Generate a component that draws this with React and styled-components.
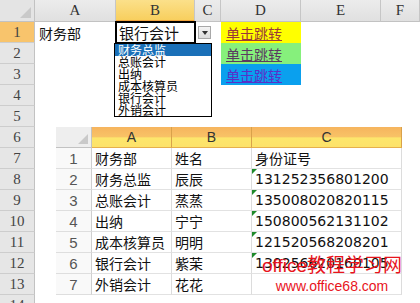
import React from 'react';
import styled, { createGlobalStyle } from 'styled-components';

const GlobalStyle = createGlobalStyle`
  html, body { margin: 0; padding: 0; background: #fff; overflow: hidden; }
  body { font-family: "Liberation Sans", "Noto Sans CJK SC", sans-serif; }
`;

const cjk = `"Noto Sans CJK SC", "Liberation Sans", sans-serif`;

const Sheet = styled.div`
  position: relative;
  width: 420px;
  height: 303px;
  overflow: hidden;
  display: grid;
  grid-template-columns: 35px 81px 79px 26px 80px 80px 39px;
  grid-template-rows: 22px repeat(14, 21px);
`;

const Corner = styled.div`
  position: relative;
  background: ${p => p.$light ? '#eeeeee' : '#e4e4e4'};
  border-right: 1px solid #c2c2c2;
  border-bottom: 1px solid #c2c2c2;
  &::after {
    content: '';
    position: absolute;
    right: 3px;
    bottom: 3px;
    border-left: ${p => p.$size || 11}px solid transparent;
    border-bottom: ${p => p.$size || 11}px solid #c9c9c9;
  }
`;

const ColHead = styled.div`
  display: flex;
  align-items: center;
  justify-content: center;
  font-family: "Liberation Serif", serif;
  font-size: 15px;
  color: #333;
  background: ${p => p.$active ? 'linear-gradient(#fbe08a, #f8cf5e)' : 'linear-gradient(#ececec, #e0e0e0)'};
  border-right: 1px solid #c6c6c6;
  border-bottom: ${p => p.$active ? '2px solid #f1a33b' : '1px solid #c2c2c2'};
`;

const RowHead = styled.div`
  display: flex;
  align-items: center;
  justify-content: center;
  font-family: "Liberation Serif", serif;
  font-size: 15px;
  color: #444;
  background: ${p => p.$active ? '#f8c46c' : '#e6e6e6'};
  border-right: 1px solid #c2c2c2;
  border-bottom: 1px solid #cdcdcd;
`;

const Cell = styled.div`
  position: relative;
  display: flex;
  align-items: center;
  padding-left: 4px;
  font-family: ${cjk};
  font-size: 14px;
  color: #111;
  white-space: nowrap;
  background: ${p => p.$bg || 'transparent'};
`;

const EditCell = styled(Cell)`
  outline: 2px solid #000;
  outline-offset: -1px;
  z-index: 2;
  font-size: 15px;
  padding-left: 3px;
`;

const ArrowCell = styled.div`
  display: flex;
  align-items: center;
  padding-left: 3px;
`;

const ArrowBtn = styled.div`
  width: 11px;
  height: 11px;
  display: flex;
  align-items: center;
  justify-content: center;
  background: linear-gradient(#f4f4f4, #dcdcdc);
  border: 1px solid #a8a8a8;
  &::after {
    content: '';
    border-left: 3px solid transparent;
    border-right: 3px solid transparent;
    border-top: 4px solid #333;
  }
`;

const LinkCell = styled(Cell)`
  text-decoration: underline;
  color: ${p => p.$color};
  padding-left: 5px;
`;

const DropList = styled.div`
  position: absolute;
  left: 114px;
  top: 43px;
  width: 96px;
  border: 1px solid #000;
  background: #fff;
  z-index: 3;
`;

const DropItem = styled.div`
  height: 12px;
  display: flex;
  align-items: center;
  font-family: ${cjk};
  font-size: 12px;
  line-height: 12px;
  padding-left: 3px;
  color: ${p => p.$selected ? '#fff' : '#000'};
  background: ${p => p.$selected ? '#1a70b8' : 'transparent'};
  white-space: nowrap;
`;

const Picture = styled.div`
  position: absolute;
  left: 56px;
  top: 127px;
  width: 346px;
  height: 168px;
  background: #fff;
  display: grid;
  grid-template-columns: 36px 80px 80px 150px;
  grid-template-rows: repeat(8, 21px);
  z-index: 1;
`;

const PicHead = styled.div`
  display: flex;
  align-items: center;
  justify-content: center;
  font-family: "Liberation Sans", sans-serif;
  font-size: 14px;
  color: #333;
  background: linear-gradient(#f6b45e 0%, #f8c266 48%, #fde66c 55%, #fde26a 100%);
  border-right: 1px solid #d9a24a;
  border-bottom: 1px solid #e6b04c;
`;

const PicRowHead = styled.div`
  display: flex;
  align-items: center;
  justify-content: center;
  font-family: "Liberation Sans", sans-serif;
  font-size: 15px;
  color: #555;
  background: #f9f9f9;
  border-right: 1px solid #cfcfcf;
  border-bottom: 1px solid #dedede;
`;

const PicCell = styled.div`
  position: relative;
  display: flex;
  align-items: center;
  padding-left: 3px;
  font-family: ${p => p.$num ? '"DejaVu Sans", sans-serif' : cjk};
  font-size: 14px;
  color: #111;
  white-space: nowrap;
  overflow: hidden;
  border-right: 1px solid #dcdcdc;
  border-bottom: 1px solid #e2e2e2;
  &::before {
    content: '';
    display: ${p => p.$flag ? 'block' : 'none'};
    position: absolute;
    left: 0;
    top: 0;
    border-top: 5px solid #1f8a2a;
    border-right: 5px solid transparent;
  }
`;

const Watermark = styled.div`
  position: absolute;
  left: 256px;
  top: 255px;
  width: 152px;
  display: flex;
  flex-direction: column;
  align-items: center;
  color: #e8141c;
  z-index: 4;
  font-family: "Liberation Sans", ${cjk};
`;

const MarkTitle = styled.div`
  font-size: 19px;
  line-height: 21px;
  white-space: nowrap;
`;

const MarkUrl = styled.div`
  font-size: 14px;
  line-height: 16px;
  margin-top: 2px;
  white-space: nowrap;
`;

const cols = ['A', 'B', 'C', 'D', 'E', 'F'];
const options = ['财务总监', '总账会计', '出纳', '成本核算员', '银行会计', '外销会计'];
const links = [
  { bg: '#ffff00', color: '#993a3a' },
  { bg: '#86f07c', color: '#5a3a60' },
  { bg: '#0aa0ee', color: '#5a2fc8' },
];
const people = [
  ['财务部', '姓名', '身份证号'],
  ['财务总监', '辰辰', '131252356801200'],
  ['总账会计', '蒸蒸', '135008020820115'],
  ['出纳', '宁宁', '150800562131102'],
  ['成本核算员', '明明', '121520568208201'],
  ['银行会计', '紫茉', '130256620160105'],
  ['外销会计', '花花', ''],
];

export default function App() {
  const rows = [];
  for (let r = 1; r <= 14; r++) {
    rows.push(<RowHead key={'h' + r} $active={r === 1}>{r}</RowHead>);
    if (r === 1) {
      rows.push(<Cell key="a1">财务部</Cell>);
      rows.push(<EditCell key="b1">银行会计</EditCell>);
      rows.push(<ArrowCell key="c1"><ArrowBtn /></ArrowCell>);
    } else {
      rows.push(<Cell key={'a' + r} />, <Cell key={'b' + r} />, <Cell key={'c' + r} />);
    }
    const link = links[r - 1];
    rows.push(link
      ? <LinkCell key={'d' + r} $bg={link.bg} $color={link.color}>单击跳转</LinkCell>
      : <Cell key={'d' + r} />);
    rows.push(<Cell key={'e' + r} />, <Cell key={'f' + r} />);
  }

  return (
    <>
      <GlobalStyle />
      <Sheet>
        <Corner />
        {cols.map(c => <ColHead key={c} $active={c === 'B'}>{c}</ColHead>)}
        {rows}

        <DropList>
          {options.map((o, i) => <DropItem key={o} $selected={i === 0}>{o}</DropItem>)}
        </DropList>

        <Picture>
          <Corner $light $size={10} />
          {['A', 'B', 'C'].map(c => <PicHead key={c}>{c}</PicHead>)}
          {people.map((p, i) => (
            <React.Fragment key={i}>
              <PicRowHead>{i + 1}</PicRowHead>
              <PicCell>{p[0]}</PicCell>
              <PicCell>{p[1]}</PicCell>
              <PicCell $num={i > 0} $flag={i > 0 && i < 6}>{p[2]}</PicCell>
            </React.Fragment>
          ))}
        </Picture>

        <Watermark>
          <MarkTitle>office教程学习网</MarkTitle>
          <MarkUrl>www.office68.com</MarkUrl>
        </Watermark>
      </Sheet>
    </>
  );
}
